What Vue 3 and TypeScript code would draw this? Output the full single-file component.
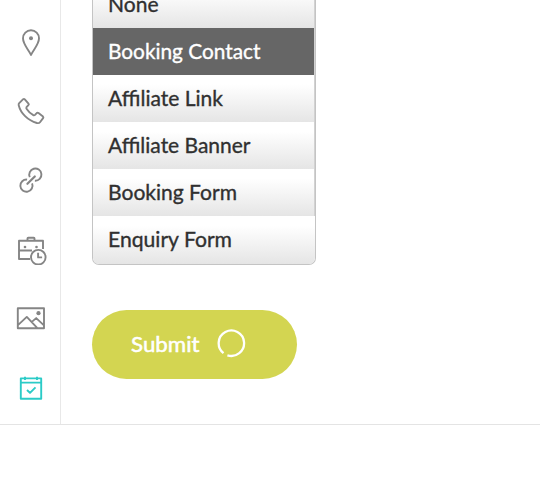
<script setup lang="ts">
interface Option {
  label: string
  width: number
}

const options: Option[] = [
  { label: 'None', width: 50.5 },
  { label: 'Booking Contact', width: 152.5 },
  { label: 'Affiliate Link', width: 115 },
  { label: 'Affiliate Banner', width: 142.5 },
  { label: 'Booking Form', width: 129 },
  { label: 'Enquiry Form', width: 124 },
]
const selected = 'Booking Contact'
</script>

<template>
  <div class="page">
    <div class="panel">
      <nav class="sidebar">
        <a class="item">
          <svg viewBox="0 0 32 32"><path d="M16 29C14 24 8 18.7 8 12.3a8 8 0 0 1 16 0C24 18.7 18 24 16 29Z" /><circle class="dot" cx="16" cy="12.2" r="2" /></svg>
        </a>
        <a class="item">
          <svg viewBox="0 0 32 32"><path d="M4.2 8.2 8.2 4.2Q9 3.5 9.8 4.3L13.5 8.6Q14.2 9.4 13.4 10.2L11.5 12.2Q11 13 11.7 14.1 14.2 18 18.3 20.2 19.2 20.7 20 19.9L21.7 18.1Q22.6 17.4 23.5 18.1L28 21.6Q28.7 22.3 28.1 23.1L25 27.2Q24 28.5 21.9 28C12.7 25.5 5.7 18.2 3.7 10.2Q3.4 9 4.2 8.2Z" /></svg>
        </a>
        <a class="item">
          <svg viewBox="0 0 32 32"><path d="M14.8 13.2A6.1 6.1 0 1 1 19.9 16.7" /><path d="M17.1 19.4A6.1 6.1 0 1 1 12.1 15.6" /><path class="bar" d="m12.4 19.8 7.4-7.3" /></svg>
        </a>
        <a class="item">
          <svg viewBox="0 0 32 32"><path d="M15 26H4V7.7H28V16M4 17.5H17M12.5 7.5V5.5q0-.7.7-.7h5.6q.7 0 .7.7v2" /><circle class="dot" cx="10" cy="14" r="1.3" /><circle class="dot" cx="21.5" cy="14" r="1.3" /><circle class="clock" cx="23.3" cy="24.2" r="7.3" /><path d="M23.1 19.7v4.7h4" /></svg>
        </a>
        <a class="item">
          <svg viewBox="0 0 32 32"><path d="M2.8 6.3h26.2v20H2.8ZM3.2 22.9l8.6-8L22.6 26.3M16.8 19.9l4.4-3.8 7.5 7" /><circle class="dot" cx="23.5" cy="11.2" r="2.1" /></svg>
        </a>
        <a class="item active">
          <svg viewBox="0 0 32 32"><path d="M5.8 6.4h20.4v20.4H5.8ZM5.8 10.6h20.4M10 4.8v3.2M22 4.800v3.200M12 18l3 2.900 5.500-5.600" /></svg>
        </a>
      </nav>
      <main class="content">
        <div class="select">
          <div class="options">
            <div v-for="option in options" :key="option.label" class="option" :class="{ selected: option.label === selected }">
              <svg class="label" width="190" height="47"><text x="0" y="31" :textLength="option.width" lengthAdjust="spacingAndGlyphs">{{ option.label }}</text></svg>
            </div>
          </div>
        </div>
        <button class="submit" type="button">
          <svg class="submit-text" width="69" height="40"><text x="0" y="27" textLength="68.5" lengthAdjust="spacingAndGlyphs">Submit</text></svg>
          <svg class="spinner" viewBox="0 0 30 30"><path d="M11.4 27.3A12.7 12.7 0 1 0 7.5 25.2" /></svg>
        </button>
      </main>
    </div>
  </div>
</template>

<style>
body {
  margin: 0;
  background: #fff;
}
</style>

<style scoped>
.page {
  width: 540px;
  height: 480px;
  overflow: hidden;
  background: #fff;
  font-family: Lato, "Liberation Sans", sans-serif;
}
.panel {
  display: flex;
  height: 425px;
  box-sizing: border-box;
  border-bottom: 1px solid #e4e4e4;
}
.sidebar {
  width: 61px;
  box-sizing: border-box;
  padding-top: 7px;
  border-right: 1px solid #e8e8e8;
}
.item {
  display: flex;
  height: 69.2px;
  align-items: center;
  justify-content: center;
  color: #858585;
  padding-left: 1px;
}
.item svg {
  width: 32px;
  height: 32px;
  fill: none;
  stroke: currentColor;
  stroke-width: 1.9;
  stroke-linejoin: round;
}
.item .dot {
  fill: currentColor;
  stroke: none;
}
.item .clock {
  fill: #fff;
}
.item .bar {
  stroke-width: 2.2;
  stroke-linecap: round;
}
.item.active {
  color: #2bcbc7;
}
.content {
  padding-left: 31px;
}
.select {
  display: flex;
  width: 224px;
  height: 265px;
  box-sizing: border-box;
  border: 1px solid #c4c4c4;
  border-top: 0;
  border-bottom-width: 1.5px;
  border-radius: 0 0 7px 7px;
  overflow: hidden;
  background: #fff;
}
.options {
  flex: 1;
  margin-top: -19px;
}
.option {
  height: 47.1px;
  box-sizing: border-box;
  padding-left: 15px;
  border-right: 1px solid #d2d2d2;
  background: linear-gradient(#fff 20%, #e5e5e5);
}
.option:last-child {
  border-right: 0;
}
.option.selected {
  background: #666;
}
.label,
.submit-text {
  display: block;
  overflow: visible;
}
.label text {
  font-size: 21px;
  fill: #303030;
  stroke: #303030;
  stroke-width: 0.35px;
}
.selected .label text {
  fill: #fff;
  stroke: #fff;
}
.submit {
  display: flex;
  width: 205px;
  height: 69px;
  align-items: center;
  gap: 16px;
  margin: 45px 0 0;
  padding: 0 0 0 39px;
  border: 0;
  border-radius: 35px;
  background: #d3d551;
  font-family: inherit;
}
.submit-text text {
  font-size: 21px;
  fill: #fff;
  stroke: #fff;
  stroke-width: 0.5px;
}
.spinner {
  width: 30px;
  height: 30px;
  margin-top: -3px;
  fill: none;
  stroke: #fff;
  stroke-width: 2.3;
}
</style>
